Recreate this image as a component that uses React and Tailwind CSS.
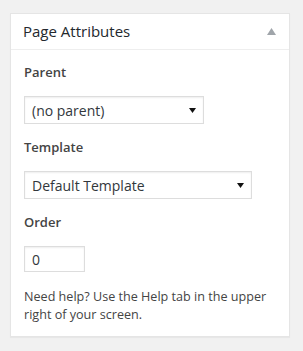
import React from 'react';

const Caret = () => (
    <svg width="7" height="5" viewBox="0 0 7 5" className="block">
        <path d="M0 0h7L3.5 5z" fill="#111" />
    </svg>
);

const FakeSelect = ({ value, width }) => (
    <div
        className={`${width} h-[28px] flex items-center justify-between border border-[#ddd] bg-white pl-[7px] pr-[7px] text-[14px] text-[#32373c] shadow-[inset_0_1px_2px_rgba(0,0,0,0.07)]`}
    >
        <span>{value}</span>
        <Caret />
    </div>
);

const Label = ({ children }) => (
    <p className="leading-[20px] text-[13px] font-semibold text-[#444]">{children}</p>
);

const App = () => {
    return (
        <div
            className="min-h-[351px] bg-[#f1f1f1] pt-[13px] pl-[10px]"
            style={{ fontFamily: '"Open Sans", sans-serif' }}
        >
            <div className="w-[280px] bg-white border border-[#e5e5e5] shadow-[0_1px_1px_rgba(0,0,0,0.04)]">
                <div className="h-[36px] flex items-center justify-between pl-[12px] pr-[13px] border-b border-[#eee]">
                    <h2 className="text-[15px] text-[#23282d]">Page Attributes</h2>
                    <svg width="9" height="7" viewBox="0 0 9 7">
                        <path d="M4.5 0L9 7H0z" fill="#a0a5aa" />
                    </svg>
                </div>
                <div className="px-[13px] pb-[12px] pt-[12px]">
                    <Label>Parent</Label>
                    <div className="mt-[14px]">
                        <FakeSelect value="(no parent)" width="w-[180px]" />
                    </div>
                    <div className="mt-[13px]">
                        <Label>Template</Label>
                    </div>
                    <div className="mt-[14px]">
                        <FakeSelect value="Default Template" width="w-[228px]" />
                    </div>
                    <div className="mt-[13px]">
                        <Label>Order</Label>
                    </div>
                    <div className="mt-[14px]">
                        <input
                            type="text"
                            defaultValue="0"
                            className="block w-[61px] h-[26px] border border-[#ddd] px-[7px] text-[14px] text-[#32373c] shadow-[inset_0_1px_2px_rgba(0,0,0,0.07)] outline-none"
                        />
                    </div>
                    <p className="mt-[16px] text-[12.6px] leading-[18px] text-[#444]">
                        Need help? Use the Help tab in the upper right of your screen.
                    </p>
                </div>
            </div>
        </div>
    );
};

export default App;
